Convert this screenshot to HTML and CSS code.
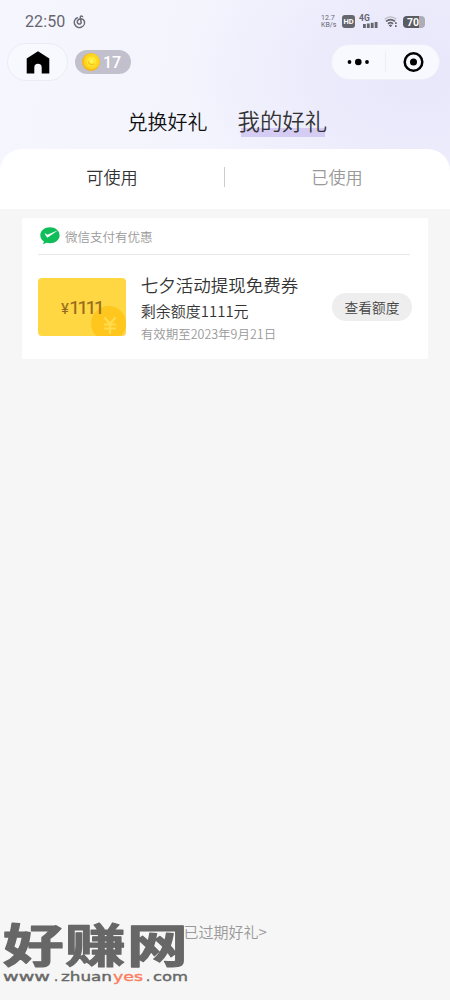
FILE: index.html
```html
<!DOCTYPE html>
<html lang="zh-CN">
<head>
<meta charset="utf-8">
<title>我的好礼</title>
<link rel="stylesheet" href="styles.css">
</head>
<body>
<div class="app">
  <header class="hero">
    <div class="status">
      <span class="time">22:50</span>
      <svg class="netease" width="13" height="14" viewBox="0 0 13 14" fill="none" stroke="#6b6b73" stroke-width="1.500" stroke-linecap="round"><path d="M4.300 2.800A5.100 5.100 0 1 0 11.300 6C10.300 3.200 5.800 3.100 4.500 5.800C3.200 9.200 8.200 10.400 8.200 7.300L7.300 3C7 1.200 8.300.7 9.500 1.500"/></svg>
      <span class="speed"><span>12.7</span><span>KB/s</span></span>
      <span class="hd">HD</span>
      <span class="cell"><span class="gen">4G</span>
        <svg width="15" height="6" viewBox="0 0 15 6" fill="#66666e"><rect y="2" width="2.800" height="4"/><rect x="3.900" y="1.500" width="2.800" height="4.500"/><rect x="7.800" y=".8" width="2.800" height="5.200"/><rect x="11.700" width="2.800" height="6"/></svg>
      </span>
      <svg class="wifi" width="14" height="12" viewBox="0 0 14 12" fill="none" stroke="#66666e"><path stroke="#b7b7c1" stroke-width="1.200" d="M.7 3.300Q6.500-1.500 12.300 3.300"/><path stroke-width="1.700" d="M2 5.400Q6.500 1.800 11 5.400M4 7.800Q6.500 5.600 9 7.800"/><path fill="#66666e" stroke="none" d="M4.700 9.200Q6.500 8 8.300 9.200L6.500 11.200ZM11 6.200h1.700v1.700H11zM11 9.200h1.700v1.700H11z"/></svg>
      <span class="battery"><span>70</span></span>
    </div>
    <div class="nav">
      <div class="home"><svg width="24" height="23" viewBox="0 0 24 23"><path d="M.7 7.500 12 .2 23.300 7.500V22.500H15.700V16.500a3.700 3.700 0 0 0-7.400 0v6H.7Z"/></svg></div>
      <div class="coins">
        <svg width="18" height="18" viewBox="0 0 18 18"><circle cx="9" cy="9" r="9" fill="#f5b51c"/><circle cx="9.600" cy="8.400" r="8" fill="#ffd51d"/><circle cx="9.500" cy="8.600" r="5" fill="#ffe735"/><path d="M6.200 8.400a3.700 3.700 0 0 0 6.500 2.200" fill="none" stroke="#f5c51c" stroke-width="1.200"/><circle cx="9.300" cy="8.100" r="1.800" fill="#fff45a"/></svg>
        <span>17</span>
      </div>
      <div class="capsule">
        <svg width="53" height="34" viewBox="0 0 53 34"><circle cx="17.500" cy="17" r="1.900"/><circle cx="26.300" cy="17" r="3.300"/><circle cx="35" cy="17" r="1.900"/></svg>
        <i class="split"></i>
        <svg width="53" height="34" viewBox="0 0 53 34"><circle cx="27.500" cy="17" r="8.800" fill="none" stroke="#000" stroke-width="2.500"/><circle cx="27.500" cy="17" r="3.500"/></svg>
      </div>
    </div>
    <div class="titles">
      <span class="title">兑换好礼</span>
      <span class="title current">我的好礼</span>
    </div>
    <div class="tabs">
      <span class="tab on">可使用</span>
      <i class="bar"></i>
      <span class="tab">已使用</span>
    </div>
  </header>
  <main class="list">
    <section class="card">
      <div class="source">
        <svg width="20" height="18" viewBox="0 0 20 18"><path fill="#0fbd59" d="M10 .3C4.600.3.300 3.800.300 8.200c0 2.600 1.300 4.700 3.500 6.100L3.200 17.200 6.500 15.700c1.100.3 2.200.5 3.500.5 5.300 0 9.600-3.500 9.600-8S15.300.300 10 .3Z"/><path fill="#fff" d="M4.600 6.500c.8-.3 1.800.6 2.800 1.200L18 3.300 8.500 10.100c-.7.500-1.400.5-1.800-.2Z"/></svg>
        <span>微信支付有优惠</span>
      </div>
      <div class="coupon">
        <div class="ticket">
          <svg class="coin" width="35" height="30" viewBox="0 0 35 30"><circle cx="17.500" cy="17.500" r="17.500" fill="#ffc61d"/><path d="M13.500 11.500 19 18 24.500 11.500M13 18.500h12M13 22.500h12M19 18v10" fill="none" stroke="#ffdb4d" stroke-width="2.200"/></svg>
          <span class="amount"><small>¥</small>1111</span>
        </div>
        <div class="info">
          <div class="name">七夕活动提现免费券</div>
          <div class="left">剩余额度1111元</div>
          <div class="date">有效期至2023年9月21日</div>
        </div>
        <span class="button">查看额度</span>
      </div>
    </section>
  </main>
  <footer class="expired">已过期好礼&gt;</footer>
  <svg class="mark" width="192" height="76" viewBox="0 0 192 76">
    <text class="mark-name" transform="translate(3 51) scale(1.320 1)" textLength="140" lengthAdjust="spacing">好赚网</text>
    <g class="mark-url">
      <text x="3" y="70" textLength="47" lengthAdjust="spacingAndGlyphs">www</text>
      <text x="54" y="70">.</text>
      <text x="61" y="70" textLength="51" lengthAdjust="spacingAndGlyphs">zhuan</text>
      <text class="yes" x="113" y="70" textLength="30" lengthAdjust="spacingAndGlyphs">yes</text>
      <text x="146" y="70">.</text>
      <text x="153" y="70" textLength="35" lengthAdjust="spacingAndGlyphs">com</text>
    </g>
  </svg>
</div>
</body>
</html>
```
FILE: styles.css
```css
* { box-sizing: border-box; }
body { margin: 0; font-family: "Noto Sans CJK SC", sans-serif; font-weight: 350; color: #333; background: #f6f6f6; }
svg { display: block; flex: none; }
.app { position: relative; width: 450px; height: 1000px; display: flex; flex-direction: column; overflow: hidden; }
.hero { background: radial-gradient(ellipse 230px 160px at 420px 75px, #e8e7fb, #ebebfc 45%, rgba(240,240,253,0)), linear-gradient(100deg, #f6f6fe, #f1f1fd); }
.status { height: 43px; padding: 0 25px 0 25px; display: flex; align-items: center; font-family: Roboto, sans-serif; font-weight: 400; color: #66666e; }
.time { font-size: 16px; letter-spacing: .1px; }
.netease { margin-left: 8px; }
.speed { margin-left: auto; display: flex; flex-direction: column; font-size: 7px; line-height: 7px; width: 15px; }
.hd { width: 13px; height: 13px; border-radius: 3px; background: #66666e; color: #fff; font: bold 7.500px/13px Roboto, sans-serif; text-align: center; margin-left: 6px; }
.cell { width: 19px; height: 13px; margin-left: 4px; display: flex; flex-direction: column; align-items: flex-end; }
.gen { align-self: flex-start; font-size: 8.500px; font-weight: bold; line-height: 7px; }
.wifi { margin: 1px 0 0 6px; }
.battery { width: 22px; height: 12px; margin-left: 5px; border-radius: 4px; background: linear-gradient(90deg, #5b5b62 75%, #adadb7 75%); color: #fff; font-weight: bold; font-size: 10.500px; line-height: 12px; text-align: center; }
.battery span { display: block; line-height: 13px; padding-right: 2px; }
.nav { height: 38px; display: flex; align-items: center; padding: 0 10px 0 7px; }
.home { width: 61px; height: 38px; border: 1px solid #ececf4; border-radius: 19px; background: #f8f8ff; display: flex; align-items: center; justify-content: center; }
.coins { width: 56px; height: 24px; margin-left: 7px; border-radius: 12px; background: #c1c0cc; display: flex; align-items: center; padding-left: 7px; gap: 3px; color: #fff; font: 500 16px/26px Roboto, sans-serif; }
.coins span { padding-top: 2px; }
.capsule { width: 109px; height: 36px; margin-left: auto; border: 1px solid #eeeef7; border-radius: 18px; background: #f8f8ff; display: flex; align-items: center; }
.split { width: 1px; height: 20px; background: #ededf5; }
.titles { height: 68px; padding: 0 0 0 127.500px; display: flex; align-items: flex-start; gap: 30px; color: #111; }
.title { font-size: 20px; line-height: 30px; margin-top: 26px; }
.current { font-size: 22.400px; line-height: 29px; height: 32px; margin-top: 25px; color: #333; background: linear-gradient(#d4ccf3, #d4ccf3) 3px 22px / 84px 9px no-repeat; }
.tabs { height: 60px; border-radius: 22px 22px 0 0; background: #fff; display: flex; align-items: center; padding: 0 1px 5px 0; }
.tab { flex: 1; text-align: center; font-size: 17.200px; color: #999; }
.tab.on { color: #333; }
.bar { width: 1px; height: 20px; background: #ccc; }
.list { padding: 9px 22px 0; flex: 1; }
.card { height: 141px; padding: 0 16px; background: #fff; border-radius: 2px; }
.source { height: 37px; margin-right: 2px; padding-left: 2px; border-bottom: 1px solid #e8e8e8; display: flex; align-items: center; gap: 5px; font-size: 12.500px; color: #999; }
.coupon { display: flex; padding-top: 18px; }
.ticket { position: relative; width: 88px; height: 58px; margin-top: 5px; border-radius: 4px; background: #ffd742; overflow: hidden; display: flex; align-items: center; justify-content: center; }
.coin { position: absolute; right: 0; bottom: 0; }
.amount { position: relative; font: 400 19px Roboto, sans-serif; letter-spacing: -2.400px; color: #956b21; -webkit-text-stroke: .2px #956b21; }
.amount small { font-size: 14px; margin-right: 3px; }
.info { width: 180px; margin-left: 15px; white-space: nowrap; }
.name { font-size: 17.500px; line-height: 23px; color: #333; }
.left { font-size: 15px; line-height: 29px; color: #333; }
.date { font-size: 12.500px; line-height: 18px; color: #999; }
.button { width: 80px; height: 28px; margin: 20px 0 0 12px; flex: none; border-radius: 14px; background: #eee; color: #444; font-size: 13.700px; line-height: 28px; text-align: center; }
.expired { height: 79px; text-align: center; font-size: 15px; line-height: 22px; color: #999; }
.mark { position: absolute; left: 0; top: 911px; overflow: visible; fill: #676767; }
.mark-name { font: 700 46px "Noto Sans CJK SC", sans-serif; stroke: #676767; stroke-width: 1.200px; stroke-linejoin: round; }
.mark-url { font: 400 13px "DejaVu Sans", sans-serif; stroke: #676767; stroke-width: .4px; }
.yes { fill: #fa805f; stroke: #fa805f; }
```
